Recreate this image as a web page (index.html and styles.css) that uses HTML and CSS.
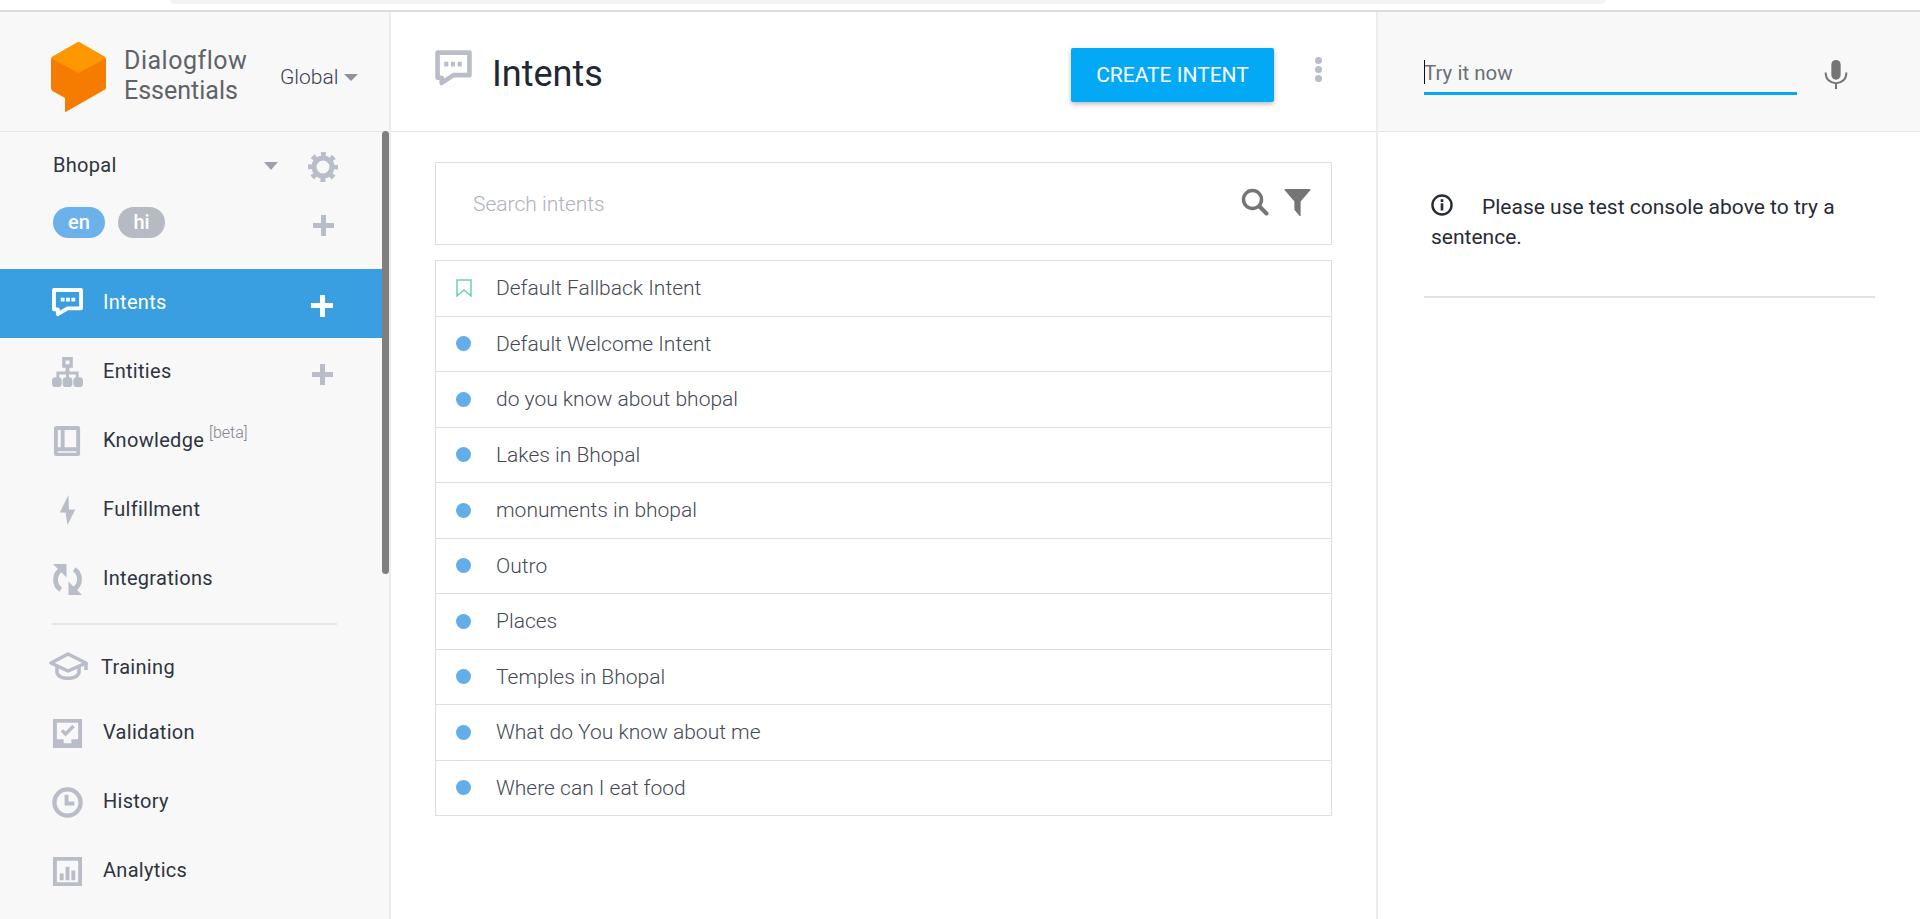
FILE: index.html
```html
<!DOCTYPE html>
<html lang="en">
<head>
<meta charset="utf-8">
<title>Dialogflow Essentials - Intents</title>
<link rel="stylesheet" href="styles.css">
</head>
<body>
<div class="browser-strip"><div class="browser-pill"></div></div>
<div class="app">
  <aside class="sidebar">
    <div class="brand">
      <svg class="logo" viewBox="0 0 55 70"><path fill="#f57c00" d="M27.5 0 L1 15 Q0 16 0 18 V46 Q0 48 1.500 49 L14 56 V69 Q14 70.500 15.500 69.500 L54 47.500 Q55 47 55 45 V18 Q55 16 54 15 Z"/><path fill="#ff9800" d="M26 .5 Q27.500 -.300 29 .5 L54 15 Q55 15.700 54.500 16.500 L27.500 31 L.5 16.500 Q0 15.700 1 15 Z"/></svg>
      <div class="brand-name"><span class="brand-first">Dialogflow</span><br>Essentials</div>
      <div class="region">Global<span class="caret caret-region"></span></div>
    </div>
    <div class="agent">
      <div class="agent-row">
        <span class="agent-name">Bhopal</span>
        <span class="caret caret-agent"></span>
        <svg class="gear" viewBox="0 0 32 32"><circle cx="16" cy="16" r="9" fill="none" stroke="#b8bdc7" stroke-width="5"/><circle cx="16" cy="16" r="12.500" fill="none" stroke="#b8bdc7" stroke-width="5" stroke-dasharray="4.800 5.017" stroke-dashoffset="2.400"/></svg>
      </div>
      <div class="lang-row">
        <span class="lang lang-on">en</span>
        <span class="lang lang-off">hi</span>
        <span class="plus plus-lang"></span>
      </div>
    </div>
    <nav class="nav nav-top">
      <a class="nav-item active">
        <svg class="nav-icon" viewBox="0 0 32 32"><path fill="none" stroke="#fff" stroke-width="4" stroke-linejoin="round" d="M2 2 H30 V21 H16 L6 27 V22 H2 Z"/><path fill="#fff" d="M9 10h4v4H9zM14.500 10h4v4h-4zM20 10h4v4h-4z"/></svg>
        <span>Intents</span><span class="plus plus-active"></span>
      </a>
      <a class="nav-item">
        <svg class="nav-icon" viewBox="0 0 32 32" fill="#b8bdc7"><path fill-rule="evenodd" d="M10.500 0h11v11H18v4h9.500v7h-3v-4H17.500v4h-3v-4H7.500v4h-3v-7H14v-4h-3.500zM14 3.500v4h4v-4z"/><rect x="0" y="21" width="10" height="10" rx="3.500"/><rect x="11" y="21" width="10" height="10" rx="3.500"/><rect x="22" y="21" width="10" height="10" rx="3.500"/></svg>
        <span>Entities</span><span class="plus"></span>
      </a>
      <a class="nav-item">
        <svg class="nav-icon" viewBox="0 0 32 32" fill="#b8bdc7"><path fill-rule="evenodd" d="M5 0h22a2 2 0 0 1 2 2v27a2 2 0 0 1-2 2H5a3 3 0 0 1-3-3V3a3 3 0 0 1 3-3zM6 4v18h3V4zM13 4v18h12V4zM6 26v1.500h19V26z"/></svg>
        <span>Knowledge</span><sup class="beta">[beta]</sup>
      </a>
      <a class="nav-item">
        <svg class="nav-icon" viewBox="0 0 32 32" fill="#b8bdc7"><path d="M17 0 L8 18 H14 L16 31 L24 15 H17.500 Z"/></svg>
        <span>Fulfillment</span>
      </a>
      <a class="nav-item">
        <svg class="nav-icon" viewBox="0 0 32 32" fill="none" stroke="#b8bdc7" stroke-width="5"><path d="M9 6 A12.500 12.500 0 0 0 9 26.500"/><path d="M23 26 A12.500 12.500 0 0 0 23 5.500"/><path fill="#b8bdc7" stroke="none" d="M1 0 H15 V14 Z M31 32 H17 V18 Z"/></svg>
        <span>Integrations</span>
      </a>
    </nav>
    <nav class="nav nav-bottom">
      <a class="nav-item nav-training">
        <svg class="nav-icon icon-cap" viewBox="0 0 40 30" fill="none" stroke="#b8bdc7" stroke-width="3.500"><path d="M20 2 L3 11 L20 19 L38 11 Z" stroke-linejoin="round"/><path d="M9 14 V21 C12 28 28 28 31 21 V14"/><path d="M38 11 V18"/></svg>
        <span>Training</span>
      </a>
      <a class="nav-item">
        <svg class="nav-icon" viewBox="0 0 32 32" fill="#b8bdc7"><path fill-rule="evenodd" d="M1 1h30v30H1zM5 5v17h7v4h8v-4h7V5z"/><path d="M9 13 l2.500-2.500 L14 13 l7-7 2.500 2.500 L14 18z" transform="translate(0 1)"/></svg>
        <span>Validation</span>
      </a>
      <a class="nav-item">
        <svg class="nav-icon" viewBox="0 0 32 32" fill="none" stroke="#b8bdc7"><circle cx="16" cy="16" r="13.500" stroke-width="4.500"/><path stroke-width="4" d="M15 8 V17 H23"/></svg>
        <span>History</span>
      </a>
      <a class="nav-item">
        <svg class="nav-icon" viewBox="0 0 32 32" fill="#b8bdc7"><path fill-rule="evenodd" d="M1 1h30v30H1zM5 5v22h22V5z"/><path d="M8 18h4v7H8zM14 11h4v14h-4zM20 15h4v10h-4z"/></svg>
        <span>Analytics</span>
      </a>
    </nav>
    <div class="scroll-thumb"></div>
  </aside>

  <main class="main">
    <header class="main-head">
      <svg class="title-icon" viewBox="0 0 36 36"><path fill="none" stroke="#b8bdc7" stroke-width="4.500" stroke-linejoin="round" d="M2.500 2.500 H33.500 V24.500 H18 L6.500 32 V27 H2.500 Z"/><path fill="#b8bdc7" d="M9 11.500h4v4.500H9zM15.500 11.500h4v4.500h-4zM22 11.500h4v4.500h-4z"/></svg>
      <h1 class="title">Intents</h1>
      <button class="create">CREATE INTENT</button>
      <div class="kebab"><i></i><i></i><i></i></div>
    </header>
    <div class="content">
      <div class="search">
        <span class="search-text">Search intents</span>
        <svg class="search-icon" viewBox="0 0 28 28" fill="none" stroke="#757575"><circle cx="11.500" cy="11.500" r="9" stroke-width="3.500"/><path stroke-width="4" stroke-linecap="round" d="M18.500 18.500 L25.500 25.500"/></svg>
        <svg class="filter-icon" viewBox="0 0 26 26" fill="#757575"><path d="M1 0 H25 Q26 0 25.500 1 L16 12 V26 Q15.500 26.500 15 26 L10 20 V12 L.5 1 Q0 0 1 0Z"/></svg>
      </div>
      <ul class="list">
        <li class="row"><svg class="mark" viewBox="0 0 16 18" fill="none" stroke="#68d3ae" stroke-width="1.500"><path d="M1 1 H15 V17 L8 11 L1 17 Z"/></svg><span>Default Fallback Intent</span></li>
        <li class="row"><i class="dot"></i><span>Default Welcome Intent</span></li>
        <li class="row"><i class="dot"></i><span>do you know about bhopal</span></li>
        <li class="row"><i class="dot"></i><span>Lakes in Bhopal</span></li>
        <li class="row"><i class="dot"></i><span>monuments in bhopal</span></li>
        <li class="row"><i class="dot"></i><span>Outro</span></li>
        <li class="row"><i class="dot"></i><span>Places</span></li>
        <li class="row"><i class="dot"></i><span>Temples in Bhopal</span></li>
        <li class="row"><i class="dot"></i><span>What do You know about me</span></li>
        <li class="row"><i class="dot"></i><span>Where can I eat food</span></li>
      </ul>
    </div>
  </main>

  <section class="console">
    <div class="console-head">
      <div class="try"><span class="cursor"></span>Try it now</div>
      <svg class="mic" viewBox="0 0 22 28" fill="#757575"><rect x="6.500" y="0" width="9" height="19" rx="4.500"/><path fill="none" stroke="#757575" stroke-width="2" d="M1 12 C1 26 21 26 21 12 M11 22 V28"/></svg>
    </div>
    <div class="console-body">
      <p class="hint"><svg class="info" viewBox="0 0 20 20"><circle cx="10" cy="10" r="8.700" fill="none" stroke="#262b36" stroke-width="2.200"/><path fill="#262b36" d="M8.800 8.500h2.400V15H8.800zM8.800 4.800h2.400v2.400H8.800z"/></svg>Please use test console above to try a sentence.</p>
    </div>
  </section>
</div>
</body>
</html>
```
FILE: styles.css
```css
* { box-sizing: border-box; }
html, body { margin: 0; height: 919px; overflow: hidden; }
body {
  display: flex;
  flex-direction: column;
  background: #fff;
  color: #2c313c;
  font-family: Roboto, "Liberation Sans", sans-serif;
  font-size: 20px;
}
.browser-strip {
  height: 12px;
  flex: none;
  padding: 0 315px 0 170px;
  border-bottom: 2px solid #dcdcdc;
}
.browser-pill {
  height: 4px;
  background: #f1f3f4;
  border-radius: 0 0 14px 14px;
}
.app { flex: 1; display: flex; min-height: 0; }

/* sidebar */
.sidebar {
  position: relative;
  width: 391px;
  flex: none;
  background: #f8f8f8;
  border-right: 2px solid #ececec;
  overflow: hidden;
}
.brand {
  height: 120px;
  display: flex;
  align-items: flex-start;
  border-bottom: 1px solid #e6e6e6;
  padding: 30px 0 0 51px;
}
.logo { width: 55px; height: 70px; flex: none; }
.brand-name {
  margin: 4px 0 0 18px;
  width: 125px;
  flex: none;
  font-size: 25px;
  line-height: 30px;
  font-weight: 400;
  color: #5f6368;
}
.brand-first { letter-spacing: .5px; }
.region {
  margin: 20px 0 0 31px;
  font-size: 21px;
  font-weight: 300;
  line-height: 30px;
  color: #3c4150;
  display: flex;
  align-items: center;
}
.caret { display: inline-block; width: 0; height: 0; border-style: solid; border-color: #8e929b transparent transparent; }
.caret-region { border-width: 7px 7px 0; margin-left: 6px; }
.caret-agent { border-width: 8px 7.500px 0; border-top-color: #9ea2ac; margin: 2px 0 0 auto; }

.agent { height: 137px; padding: 0 0 0 53px; }
.agent-row { display: flex; align-items: center; height: 66px; padding-right: 50px; }
.agent-name { font-size: 20px; letter-spacing: .3px; color: #2f3440; }
.gear { width: 32px; height: 32px; margin: 3px 0 0 29px; }
.lang-row { display: flex; align-items: center; height: 31px; padding-right: 55px; position: relative; margin-top: 9px; }
.lang {
  height: 31px;
  border-radius: 16px;
  color: #fff;
  font-weight: 500;
  font-size: 20px;
  line-height: 30px;
  text-align: center;
}
.lang-on { width: 52px; background: #6cb2ea; }
.lang-off { width: 47px; background: #b6bac3; margin-left: 13px; }
.plus-lang { margin: 5px 0 0 auto; }

.plus {
  position: relative;
  display: inline-block;
  flex: none;
  width: 21px;
  height: 21px;
  color: #b8bdc7;
  background: linear-gradient(currentColor, currentColor) center / 100% 5px no-repeat,
              linear-gradient(currentColor, currentColor) center / 5px 100% no-repeat;
  border-radius: 2px;
}

.nav-item {
  height: 69px;
  display: flex;
  align-items: center;
  padding: 0 56px 4px 52px;
  font-size: 20px;
  color: #2f3440;
}
.nav-item > span:first-of-type { letter-spacing: .3px; }
.nav-item .plus { margin: 8px 0 0 auto; }
.nav-icon { width: 31px; height: 31px; margin: 4px 20px 0 0; flex: none; }
.active { background: #399fe1; color: #fff; margin-right: 7px; padding-right: 49px; }
.active .plus, .plus-active { color: #fff; width: 22px; height: 22px; }
.beta { font-size: 16px; font-weight: 300; color: #7f8491; margin: -14px 0 0 5px; line-height: 1; }
.nav-bottom { margin: 9px 52px 0 52px; padding-top: 9px; border-top: 2px solid #e6e6e6; }
.nav-bottom .nav-item { margin-left: -52px; margin-right: -52px; }
.nav-training { height: 65px; padding-bottom: 0; }
.icon-cap { width: 40px; height: 30px; margin: 0 13px 0 -4px; }
.scroll-thumb {
  position: absolute;
  top: 119px;
  left: 382px;
  width: 7px;
  height: 443px;
  border-radius: 4px;
  background: #7f7f7f;
}

/* main */
.main { width: 987px; flex: none; border-right: 2px solid #ececec; }
.main-head {
  height: 120px;
  display: flex;
  align-items: center;
  padding: 0 0 0 44px;
  border-bottom: 1px solid #e6e6e6;
}
.title-icon { width: 37px; height: 37px; margin: -6px 0 0 0; flex: none; }
.title {
  margin: 5px 0 0 20px;
  font-size: 36px;
  font-weight: 400;
  color: #212733;
}
.create {
  margin: 6px 0 0 auto;
  width: 203px;
  height: 54px;
  border: 0;
  border-radius: 2px;
  background: #03a9f4;
  color: #fff;
  font: 400 21px Roboto, "Liberation Sans", sans-serif;
  box-shadow: 0 2px 5px rgba(0,0,0,.28);
}
.kebab { display: flex; flex-direction: column; gap: 2px; margin: -4px 54px 0 41px; }
.kebab i { width: 7px; height: 7px; border-radius: 50%; background: #b8bdc7; }

.content { padding: 30px 44px 0 44px; }
.search {
  height: 83px;
  border: 1px solid #dedede;
  display: flex;
  align-items: center;
  padding: 0 20px 0 37px;
}
.search-text { font-weight: 300; font-size: 21px; color: #aeb2ba; margin-right: auto; }
.search-icon { width: 28px; height: 28px; margin: -4px 0 0 0; }
.filter-icon { width: 27px; height: 27px; margin: -2px 0 0 15px; }
.list { list-style: none; margin: 15px 0 0; padding: 0; border: 1px solid #dedede; border-bottom: 0; }
.row {
  height: 55.500px;
  display: flex;
  align-items: center;
  padding-left: 20px;
  border-bottom: 1px solid #dedede;
  font-size: 21px;
  font-weight: 300;
  color: #444a55;
}
.mark { width: 16px; height: 18px; margin-right: 24px; flex: none; }
.dot { width: 15px; height: 15px; border-radius: 50%; background: #63ade9; margin-right: 25px; flex: none; }

/* console */
.console { flex: 1; min-width: 0; }
.console-head {
  height: 120px;
  background: #f8f8f8;
  border-bottom: 1px solid #e6e6e6;
  display: flex;
  align-items: flex-start;
  padding: 47px 0 0 46px;
}
.try {
  position: relative;
  width: 373px;
  height: 36px;
  border-bottom: 3px solid #03a9f4;
  font-size: 20.500px;
  font-weight: 400;
  line-height: 28px;
  color: #6b7079;
}
.cursor { position: absolute; left: 0; top: 1px; width: 1px; height: 24px; background: #111; }
.mic { width: 24px; height: 29px; margin: 1px 0 0 27px; }
.console-body { padding: 0 45px 0 46px; }
.hint {
  margin: 60px 0 0;
  padding: 0 6px 44px 7px;
  border-bottom: 2px solid #e2e2e2;
  font-size: 21px;
  font-weight: 400;
  line-height: 30px;
  color: #262b36;
}
.info { width: 22px; height: 22px; margin-right: 29px; vertical-align: -2px; }
```
